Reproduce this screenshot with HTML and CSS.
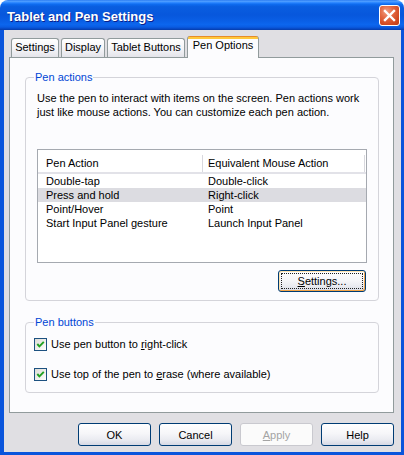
FILE: index.html
```html
<!DOCTYPE html>
<html>
<head>
<meta charset="utf-8">
<link rel="stylesheet" href="styles.css">
</head>
<body>
<div class="window">
  <div class="titlebar">
    <span class="title">Tablet and Pen Settings</span>
    <span class="close">
      <svg width="13" height="13" viewBox="0 0 13 13"><path d="M2 2 L11 11 M11 2 L2 11" stroke="#fff" stroke-width="2.4" stroke-linecap="square"/></svg>
    </span>
  </div>
  <div class="frame">
    <div class="tabs">
      <div class="tab t-settings">Settings</div>
      <div class="tab t-display">Display</div>
      <div class="tab t-tablet">Tablet Buttons</div>
      <div class="tab t-pen active">Pen Options</div>
    </div>
    <div class="panel">
      <fieldset class="group g-actions">
        <legend>Pen actions</legend>
        <p class="desc">Use the pen to interact with items on the screen. Pen actions work<br>just like mouse actions. You can customize each pen action.</p>
        <div class="list">
          <div class="lhead">
            <div class="c1">Pen Action</div>
            <div class="c2">Equivalent Mouse Action</div>
            <div class="c3"></div>
          </div>
          <div class="row"><div class="c1">Double-tap</div><div class="c2">Double-click</div></div>
          <div class="row sel"><div class="c1">Press and hold</div><div class="c2">Right-click</div></div>
          <div class="row"><div class="c1">Point/Hover</div><div class="c2">Point</div></div>
          <div class="row"><div class="c1">Start Input Panel gesture</div><div class="c2">Launch Input Panel</div></div>
        </div>
        <div class="btnrow">
          <button class="btn btn-settings"><span class="focus"><u>S</u>ettings...</span></button>
        </div>
      </fieldset>
      <fieldset class="group g-buttons">
        <legend>Pen buttons</legend>
        <div class="check check1">
          <span class="box"><svg width="11" height="11" viewBox="0 0 11 11"><path d="M2.3 5 L4.4 7.4 L8.8 2.8" fill="none" stroke="#21a121" stroke-width="1.9"/></svg></span>
          <span>Use pen button to <u>r</u>ight-click</span>
        </div>
        <div class="check check2">
          <span class="box"><svg width="11" height="11" viewBox="0 0 11 11"><path d="M2.3 5 L4.4 7.4 L8.8 2.8" fill="none" stroke="#21a121" stroke-width="1.9"/></svg></span>
          <span>Use top of the pen to <u>e</u>rase (where available)</span>
        </div>
      </fieldset>
    </div>
    <div class="footer">
      <button class="btn">OK</button>
      <button class="btn">Cancel</button>
      <button class="btn btn-disabled"><u>A</u>pply</button>
      <button class="btn">Help</button>
    </div>
  </div>
</div>
</body>
</html>
```

FILE: styles.css
```css
body {
  margin: 0;
  background: #ffffff;
  font-family: "Liberation Sans", Arial, sans-serif;
  font-size: 11px;
  color: #000;
}

.window {
  width: 404px;
  height: 455px;
  display: flex;
  flex-direction: column;
}

.titlebar {
  height: 30px;
  flex: none;
  box-sizing: border-box;
  display: flex;
  align-items: center;
  padding: 0 4px 0 7px;
  border-radius: 8px 8px 0 0;
  background: linear-gradient(to bottom,
    #2f7ff2 0%, #4a9bff 5%, #2a86ff 9%, #0e6cf0 14%, #095ee0 22%,
    #0757dc 50%, #0a5fe6 70%, #0c66ee 82%, #0a5ce2 90%, #0748c4 96%, #063ca8 100%);
}

.title {
  color: #ffffff;
  font-weight: bold;
  font-size: 13px;
  text-shadow: 1px 1px 0 #0c1f8a;
  padding-top: 2px;
}

.close {
  margin-left: auto;
  align-self: flex-start;
  margin-top: 5px;
  width: 21px;
  height: 21px;
  box-sizing: border-box;
  border: 1px solid #ffffff;
  border-radius: 3px;
  background: radial-gradient(circle at 35% 30%, #f2a084 0%, #e46a44 35%, #d24a22 70%, #bd3c15 100%);
  display: flex;
  align-items: center;
  justify-content: center;
}

.frame {
  flex: 1;
  background: #e0dfe3;
  border-style: solid;
  border-color: #0a55dc;
  border-width: 0 3px 3px 4px;
  padding: 6px 7px 0 5px;
  display: flex;
  flex-direction: column;
}

.tabs {
  display: flex;
  align-items: flex-end;
  height: 21px;
  padding-left: 2px;
  gap: 2px;
  flex: none;
}

.tab {
  height: 19px;
  box-sizing: border-box;
  border: 1px solid #919b9c;
  border-bottom: none;
  border-radius: 3px 3px 0 0;
  background: linear-gradient(#ffffff, #f4f4f7 55%, #e4e4ea);
  text-align: center;
  line-height: 17px;
}

.t-settings { width: 48px; }
.t-display { width: 44px; }
.t-tablet { width: 78px; }
.t-pen { width: 72px; }

.tab.active {
  height: 22px;
  margin-bottom: -1px;
  position: relative;
  z-index: 1;
  border-top: none;
  background: linear-gradient(#e68b2c 0, #e68b2c 1px, #ffc83c 1px, #ffc83c 3px, #fcfcfe 3px);
  line-height: 19px;
}

.panel {
  flex: none;
  height: 356px;
  box-sizing: border-box;
  border: 1px solid #919b9c;
  background: #fcfcfe;
  padding: 0 14px 0 15px;
}

.group {
  margin: 13px 0 0;
  padding: 0 11px 8px;
  border: 1px solid #d4d4da;
  border-radius: 4px;
  min-width: 0;
}

.group legend {
  color: #0046d5;
  padding: 0 1px;
  margin-left: -3px;
  line-height: 13px;
}

.g-buttons {
  margin-top: 15px;
  padding-bottom: 11px;
}

.desc {
  margin: 7px 0 0;
  line-height: 14px;
}

.list {
  margin-top: 30px;
  height: 114px;
  box-sizing: border-box;
  border: 1px solid #a5a9b0;
  background: #ffffff;
}

.lhead {
  display: grid;
  grid-template-columns: 165px 162px 1fr;
  padding-top: 5px;
  border-bottom: 2px solid #e2e2e8;
}

.lhead div {
  height: 17px;
  box-sizing: border-box;
  padding-top: 1px;
  line-height: 14px;
}

.lhead .c1 {
  padding-left: 8px;
  border-right: 1px solid #d8d8de;
}

.lhead .c2 {
  padding-left: 5px;
  border-right: 1px solid #d8d8de;
}

.row {
  display: grid;
  grid-template-columns: 165px 1fr;
  height: 14px;
  line-height: 14px;
}

.row .c1 { padding-left: 8px; }
.row .c2 { padding-left: 5px; }

.row.sel { background: #dcdce1; }

.btnrow {
  display: flex;
  justify-content: flex-end;
  margin-top: 7px;
  padding-right: 1px;
}

.btn {
  box-sizing: border-box;
  width: 73px;
  height: 23px;
  padding: 0;
  border: 1px solid #003c74;
  border-radius: 3px;
  background: linear-gradient(#ffffff, #f6f6f9 45%, #eaebf1 75%, #d6d9e5);
  font-family: inherit;
  font-size: 11px;
  color: #000;
}

.btn-settings {
  width: 88px;
  height: 22px;
  padding: 2px;
  box-shadow: inset 1px 1px 0 #fde3b0, inset -1px -1px 0 #f3a64a;
}

.btn-settings .focus {
  display: flex;
  align-items: center;
  justify-content: center;
  height: 100%;
  box-sizing: border-box;
  border: 1px dotted #202020;
}

.btn-disabled {
  border-color: #c9c9cf;
  background: #fbfbfb;
  color: #a4a4a4;
}

.check {
  display: flex;
  align-items: center;
  gap: 4px;
  margin-left: -3px;
  height: 13px;
  line-height: 13px;
}

.check1 { margin-top: 9px; }
.check2 { margin-top: 17px; }

.box {
  width: 13px;
  height: 13px;
  box-sizing: border-box;
  border: 1px solid #1c5180;
  background: linear-gradient(135deg, #dcdcd7, #ffffff);
  display: flex;
  align-items: center;
  justify-content: center;
  flex: none;
}

.footer {
  display: flex;
  justify-content: flex-end;
  gap: 8px;
  margin-top: 10px;
}
```
